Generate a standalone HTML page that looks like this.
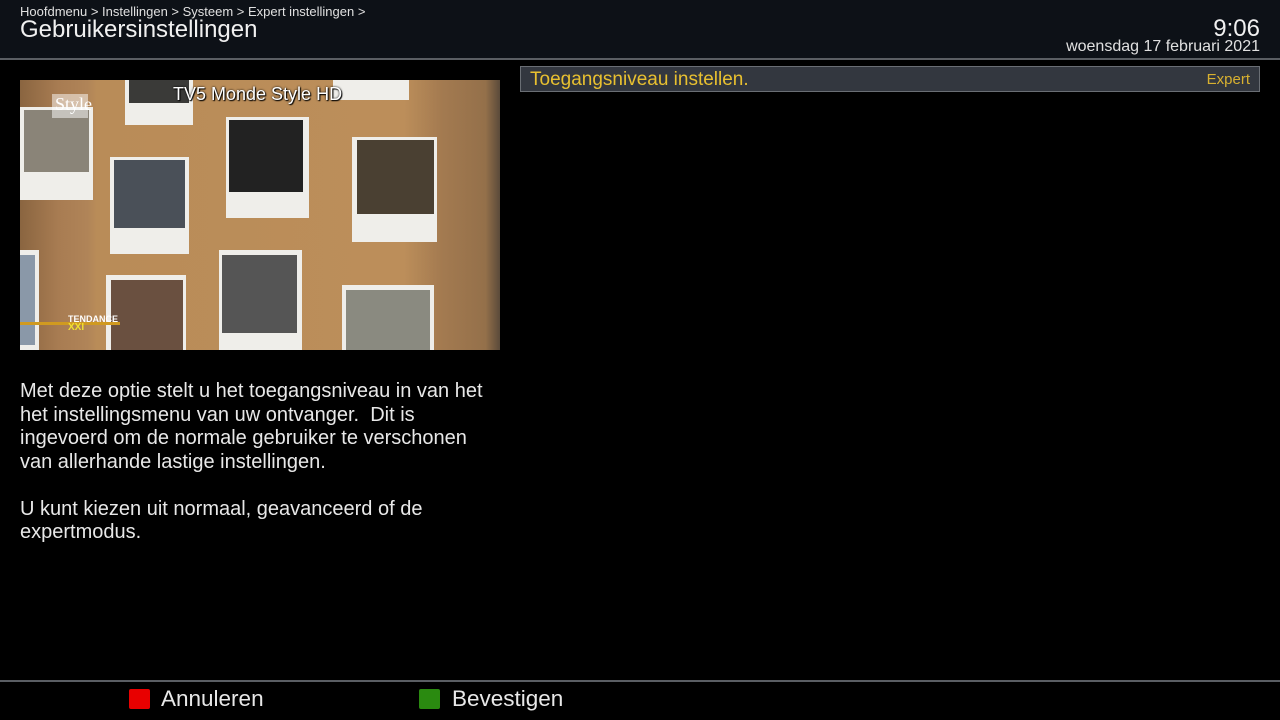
<!DOCTYPE html>
<html><head><meta charset="utf-8"><style>
*{margin:0;padding:0;box-sizing:border-box}
body{width:1280px;height:720px;background:#000;font-family:"Liberation Sans",sans-serif;color:#e8e8e8;position:relative;overflow:hidden}
.hdr{position:absolute;left:0;top:0;width:1280px;height:58px;background:#0d1117}
.hl{position:absolute;left:0;top:58px;width:1280px;height:2px;background:#5a5e63}
.fl{position:absolute;left:0;top:680px;width:1280px;height:2px;background:#5a5e63}
.a{position:absolute;white-space:nowrap}
.vid{position:absolute;left:20px;top:80px;width:480px;height:270px;overflow:hidden;background:linear-gradient(90deg,#8a6540 0%,#a87c52 8%,#b08458 14%,#b98c58 16%,#bc8e5a 80%,#a37a50 88%,#94704a 97%,#5a4a3a 100%)}
.p{position:absolute;background:#efeeea}
.ph{position:absolute;background:#3a3a38}
</style></head><body>
<div class="hdr"></div><div class="hl"></div>
<div class="a" style="left:20px;top:4px;font-size:13px;color:#e0e0e0">Hoofdmenu &gt; Instellingen &gt; Systeem &gt; Expert instellingen &gt;</div>
<div class="a" style="left:20px;top:16px;font-size:24px;color:#f0f0f0">Gebruikersinstellingen</div>
<div class="a" style="right:20px;top:15px;font-size:24px;color:#f0f0f0">9:06</div>
<div class="a" style="right:20px;top:38px;font-size:16px;color:#e0e0e0">woensdag 17 februari 2021</div>

<div class="vid">
<div class="p" style="left:0;top:27px;width:73px;height:93px"><div class="ph" style="left:4px;top:3px;width:65px;height:62px;background:#8a8478"></div></div>
<div class="p" style="left:105px;top:0;width:68px;height:45px"><div class="ph" style="left:4px;top:0;width:60px;height:23px"></div></div>
<div class="p" style="left:313px;top:0;width:76px;height:20px"></div>
<div class="p" style="left:206px;top:37px;width:83px;height:101px"><div class="ph" style="left:3px;top:3px;width:74px;height:72px;background:#222"></div></div>
<div class="p" style="left:332px;top:57px;width:85px;height:105px"><div class="ph" style="left:5px;top:3px;width:77px;height:74px;background:#4a4032"></div></div>
<div class="p" style="left:90px;top:77px;width:79px;height:97px"><div class="ph" style="left:4px;top:3px;width:71px;height:68px;background:#4a5058"></div></div>
<div class="p" style="left:0;top:170px;width:19px;height:100px"><div class="ph" style="left:0;top:5px;width:15px;height:90px;background:#8a98a8"></div></div>
<div class="p" style="left:86px;top:195px;width:80px;height:75px"><div class="ph" style="left:5px;top:5px;width:72px;height:70px;background:#6a5040"></div></div>
<div class="p" style="left:199px;top:170px;width:83px;height:100px"><div class="ph" style="left:3px;top:5px;width:75px;height:78px;background:#555"></div></div>
<div class="p" style="left:322px;top:205px;width:92px;height:65px"><div class="ph" style="left:4px;top:5px;width:84px;height:60px;background:#8a8a80"></div></div>
<div class="a" style="left:32px;top:14px;width:36px;height:24px;background:rgba(255,255,255,.5);font-family:'Liberation Serif',serif;font-size:18px;color:#fff;padding-left:3px">Style</div>
<div class="a" style="left:0;top:242px;width:100px;height:3px;background:#d09a20"></div>
<div class="a" style="left:48px;top:234px;font-size:9px;font-weight:bold;color:#fff">TENDANCE</div>
<div class="a" style="left:48px;top:242px;font-size:10px;font-weight:bold;color:#f0e030">XXI</div>
<div class="a" style="left:153px;top:4px;font-size:18px;color:#fff;text-shadow:0 0 2px #000,1px 1px 1px #000">TV5 Monde Style HD</div>
</div>

<div class="a" style="left:20px;top:380px;font-size:20px;line-height:23.5px;color:#e8e8e8;white-space:pre">Met deze optie stelt u het toegangsniveau in van het
het instellingsmenu van uw ontvanger.  Dit is
ingevoerd om de normale gebruiker te verschonen
van allerhande lastige instellingen.

U kunt kiezen uit normaal, geavanceerd of de
expertmodus.</div>

<div class="a" style="left:520px;top:66px;width:740px;height:26px;background:#33373f;border:1px solid #6a6e74"></div>
<div class="a" style="left:530px;top:69px;font-size:19px;color:#e8c030">Toegangsniveau instellen.</div>
<div class="a" style="right:30px;top:71px;font-size:15px;color:#d8b030">Expert</div>

<div class="fl"></div>
<div class="a" style="left:129px;top:689px;width:21px;height:20px;background:#e80000;border-radius:2px"></div>
<div class="a" style="left:161px;top:686px;font-size:22.5px;color:#e8e8e8">Annuleren</div>
<div class="a" style="left:419px;top:689px;width:21px;height:20px;background:#2a8a10;border-radius:2px"></div>
<div class="a" style="left:452px;top:686px;font-size:22.5px;color:#e8e8e8">Bevestigen</div>
</body></html>
